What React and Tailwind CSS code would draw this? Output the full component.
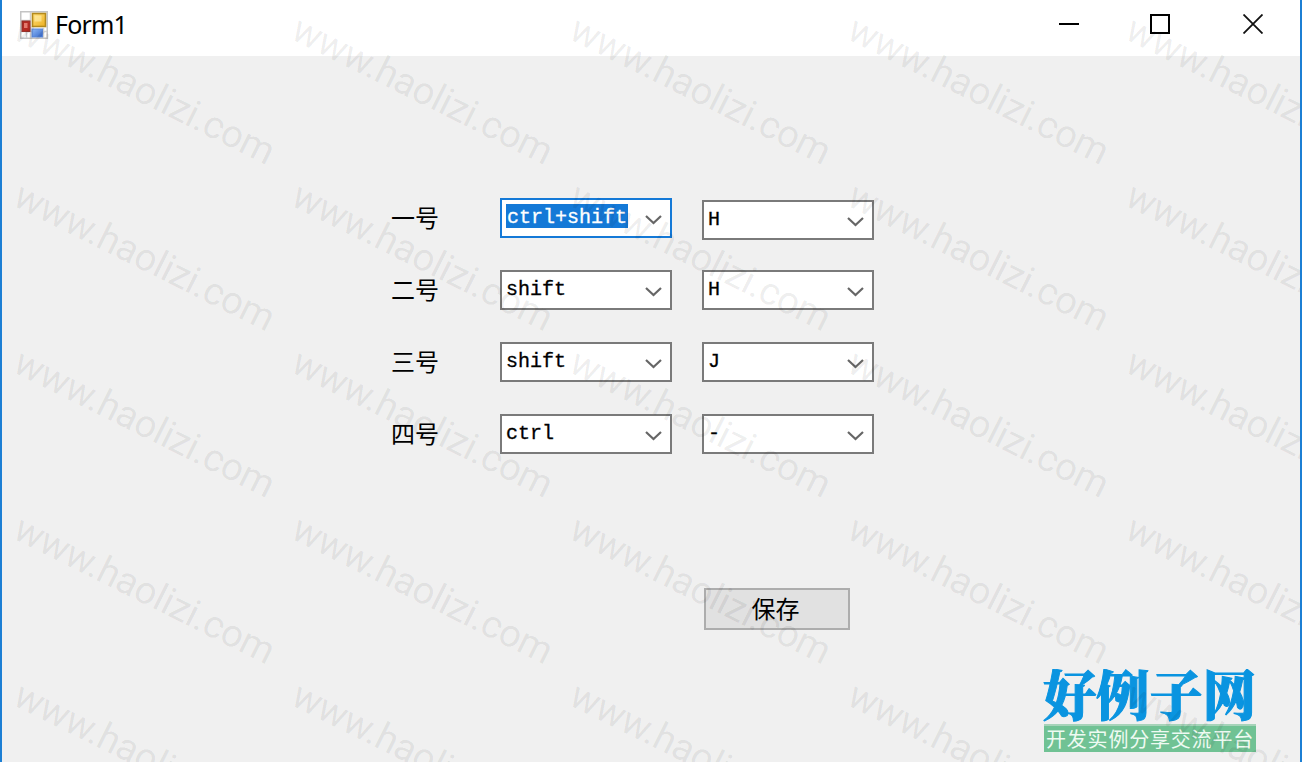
import React, { useState } from 'react';

const MODIFIERS = ['ctrl+shift', 'shift', 'ctrl', 'alt'];
const KEYS = ['H', 'J', '-'];

const INITIAL_ROWS = [
  { label: '一号', modifier: 'ctrl+shift', hotkey: 'H' },
  { label: '二号', modifier: 'shift', hotkey: 'H' },
  { label: '三号', modifier: 'shift', hotkey: 'J' },
  { label: '四号', modifier: 'ctrl', hotkey: '-' },
];

const FormIcon = () => (
  <svg width="28" height="28" viewBox="0 0 28 28">
    <defs>
      <linearGradient id="gold" x1="0" y1="0" x2="1" y2="1">
        <stop offset="0" stopColor="#ffe07a" />
        <stop offset="1" stopColor="#edaf20" />
      </linearGradient>
      <linearGradient id="blue" x1="0" y1="0" x2="1" y2="1">
        <stop offset="0" stopColor="#8fb9f5" />
        <stop offset="1" stopColor="#3468cc" />
      </linearGradient>
    </defs>
    <rect x="0.75" y="0.75" width="26.5" height="26.5" fill="#fff" stroke="#c4c4c4" strokeWidth="1.5" />
    <path d="M1 9.5h10M1 20.5h26M6.5 20v7M10.5 1v26M23.5 17v10" stroke="#cfcfcf" strokeWidth="1.5" />
    <rect x="12.5" y="2.5" width="13" height="13" fill="url(#gold)" stroke="#b48a1c" strokeWidth="1.6" />
    <rect x="14.5" y="4.5" width="7" height="6" fill="#fff0b0" opacity="0.6" />
    <rect x="2" y="10" width="8" height="10.5" fill="#b52a22" stroke="#96332c" />
    <rect x="4" y="12" width="3.5" height="5" fill="#ef8d80" opacity="0.8" />
    <rect x="12" y="18" width="10.5" height="8" fill="url(#blue)" stroke="#5b86d6" />
  </svg>
);

const TitleBar = () => (
  <div className="flex h-14 shrink-0 items-start justify-between bg-white">
    <div className="flex pt-[11px] pl-[18px]">
      <FormIcon />
      <span className="ml-[7px] -mt-[4px] font-['Noto_Sans'] text-[25px] leading-[34px] tracking-[-0.8px] text-black">Form1</span>
    </div>
    <div className="flex items-center gap-[71px] pt-[14px] pr-[37px]">
      <svg width="20" height="20" shapeRendering="crispEdges"><path d="M0 10h20" stroke="#000" strokeWidth="2" /></svg>
      <svg width="20" height="20" shapeRendering="crispEdges"><rect x="1" y="1" width="18" height="18" fill="none" stroke="#000" strokeWidth="2" /></svg>
      <svg className="ml-[2px]" width="20" height="20"><path d="M0.5 0.5l19 19M19.5 0.5l-19 19" stroke="#111" strokeWidth="1.8" /></svg>
    </div>
  </div>
);

const ComboBox = ({ value, options, focused, onChange }) => {
  const next = () => onChange(options[(options.indexOf(value) + 1) % options.length]);

  return (
    <button
      onClick={next}
      className={`flex h-10 w-[172px] items-start justify-between border-2 bg-white pr-2 pl-1 ${
        focused ? 'border-[#1479d7]' : 'border-[#7a7a7a]'
      }`}
    >
      <span
        className={`mt-1 h-6 font-['Liberation_Mono'] text-[20px] leading-[27px] whitespace-pre [-webkit-text-stroke:0.3px] ${
          focused ? 'bg-[#1479d7] pr-[1px] pl-[1px] text-white' : 'text-black'
        }`}
      >
        {value}
      </span>
      <svg className="mt-[14px]" width="17" height="12" viewBox="0 0 17 12">
        <path d="M1 2l7.5 7L16 2" fill="none" stroke="#666" strokeWidth="2.2" />
      </svg>
    </button>
  );
};

const SiteLogo = () => (
  <div className="absolute top-[669px] left-[1043px] w-[213px]">
    <svg className="block" width="213" height="55">
      <text
        x="0"
        y="47"
        textLength="213"
        lengthAdjust="spacingAndGlyphs"
        className="fill-[#0a94e0] stroke-[#0a94e0] font-['Noto_Serif_CJK_SC','Noto_Sans_CJK_SC',serif] text-[54px] font-black"
      >
        好例子网
      </text>
    </svg>
    <div className="ml-[1px] flex h-7 items-center justify-center border-t-2 border-[#a6d3b9] bg-[#70c294] font-['Noto_Sans_CJK_SC',sans-serif] text-[20px] leading-6 tracking-[0.8px] whitespace-nowrap text-[#eefaf2]">
      开发实例分享交流平台
    </div>
  </div>
);

// Repeated site mark laid diagonally over the whole window
const Watermark = () => {
  const marks = [];
  for (let row = 0; row < 5; row++) {
    for (let col = 0; col < 5; col++) {
      marks.push({ x: 11 + col * 278, y: 38 + row * 166.5 });
    }
  }
  return (
    <svg className="pointer-events-none absolute inset-0" width="1302" height="762">
      {marks.map((m) => (
        <text
          key={`${m.x}-${m.y}`}
          transform={`translate(${m.x} ${m.y}) rotate(26.5)`}
          textLength="286"
          className="fill-black/7 font-['Roboto'] text-[38.5px]"
        >
          www.haolizi.com
        </text>
      ))}
    </svg>
  );
};

const App = () => {
  const [rows, setRows] = useState(INITIAL_ROWS);

  const updateRow = (index, field, value) => {
    setRows(rows.map((row, i) => (i === index ? { ...row, [field]: value } : row)));
  };

  return (
    <div className="relative flex h-[762px] w-[1302px] flex-col overflow-hidden border-x-2 border-[#1c7fd4] bg-[#f0f0f0]">
      <TitleBar />

      <div className="flex flex-col gap-8 pt-[142px] pl-[389px]">
        {rows.map((row, i) => (
          <div key={row.label} className="flex h-10">
            <span className="w-[109px] font-['Noto_Sans_CJK_SC',sans-serif] text-[24px] leading-[37px] text-black">
              {row.label}
            </span>
            <ComboBox
              value={row.modifier}
              options={MODIFIERS}
              focused={i === 0}
              onChange={(v) => updateRow(i, 'modifier', v)}
            />
            <div className={i === 0 ? 'ml-[30px] pt-[2px]' : 'ml-[30px]'}>
              <ComboBox value={row.hotkey} options={KEYS} onChange={(v) => updateRow(i, 'hotkey', v)} />
            </div>
          </div>
        ))}
      </div>

      <button className="mt-[134px] ml-[702px] h-[42px] w-[146px] shrink-0 border-2 border-[#adadad] bg-[#e1e1e1] pr-[3px] pb-[3px] font-['Noto_Sans_CJK_SC',sans-serif] text-[24px] leading-[35px] text-black">
        保存
      </button>

      <div className="absolute inset-y-0 -left-[2px] w-[1302px]">
        <SiteLogo />
        <Watermark />
      </div>
    </div>
  );
};

export default App;
